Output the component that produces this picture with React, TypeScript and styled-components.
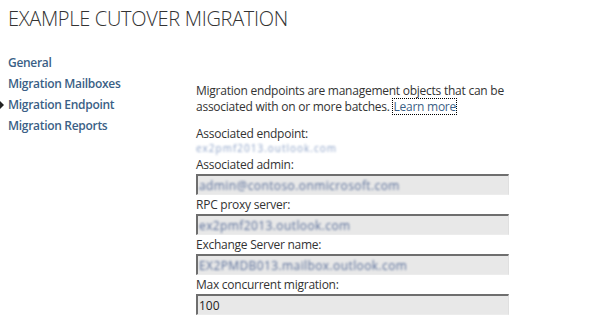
import React from "react";
import styled, { createGlobalStyle } from "styled-components";

const Global = createGlobalStyle`
  html, body { margin: 0; padding: 0; background: #fff; }
  body { font-family: "Open Sans", "Noto Sans", sans-serif; color: #333; }
`;

const Page = styled.div`
  width: 600px;
  height: 329px;
  overflow: hidden;
  box-sizing: border-box;
`;

const Title = styled.h1`
  margin: 0;
  padding: 6px 0 0 8px;
  font-family: "Open Sans", sans-serif;
  font-weight: 300;
  font-size: 20px;
  line-height: 26px;
  color: #333;
  letter-spacing: -0.3px;
`;

const Body = styled.div`
  display: flex;
  padding-top: 20px;
`;

const Nav = styled.nav`
  width: 196px;
  display: flex;
  flex-direction: column;
`;

const NavItem = styled.div<{ $active?: boolean }>`
  position: relative;
  padding-left: 8px;
  height: 21px;
  line-height: 21px;
  font-size: 12px;
  font-weight: 600;
  letter-spacing: -0.3px;
  color: #3b5f86;
  &::before {
    content: "";
    display: ${(p) => (p.$active ? "block" : "none")};
    position: absolute;
    left: 0;
    top: 7px;
    border-left: 4px solid #222;
    border-top: 4px solid transparent;
    border-bottom: 4px solid transparent;
  }
`;

const Content = styled.div`
  width: 314px;
  padding-top: 31px;
  font-size: 12px;
  letter-spacing: -0.25px;
  color: #333;
`;

const Desc = styled.p`
  margin: 0 0 11px 0;
  line-height: 16px;
`;

const LearnMore = styled.a`
  display: inline-block;
  line-height: 15px;
  margin-left: 1px;
  color: #3b5f86;
  text-decoration: none;
  outline: 1px dotted #000;
  outline-offset: 0;
`;

const Label = styled.div`
  line-height: 16px;
  margin-top: 2px;
`;

const Blurred = styled.div`
  line-height: 13px;
  font-size: 10px;
  letter-spacing: 1px;
  color: #8ea3c8;
  filter: blur(1.1px);
`;

const Field = styled.div`
  box-sizing: border-box;
  height: 21px;
  width: 313px;
  margin-top: 1px;
  margin-bottom: 1px;
  background: #e8e8e8;
  border-top: 2px solid #6e6e6e;
  border-left: 2px solid #6e6e6e;
  border-right: 1px solid #e0e0e0;
  border-bottom: 1px solid #ececec;
  padding: 1px 1px;
  display: flex;
  align-items: center;
`;

const FieldValue = styled.span<{ $blur?: boolean }>`
  font-size: 12px;
  color: ${(p) => (p.$blur ? "#5a6f9a" : "#222")};
  filter: ${(p) => (p.$blur ? "blur(1.1px)" : "none")};
  letter-spacing: ${(p) => (p.$blur ? "0.4px" : "0")};
`;

export default function App() {
  return (
    <Page>
      <Global />
      <Title>EXAMPLE CUTOVER MIGRATION</Title>
      <Body>
        <Nav>
          <NavItem>General</NavItem>
          <NavItem>Migration Mailboxes</NavItem>
          <NavItem $active>Migration Endpoint</NavItem>
          <NavItem>Migration Reports</NavItem>
        </Nav>
        <Content>
          <Desc>
            Migration endpoints are management objects that can be associated with on or more batches.{" "}
            <LearnMore href="#">Learn more</LearnMore>
          </Desc>
          <Label>Associated endpoint:</Label>
          <Blurred>ex2pmf2013.outlook.com</Blurred>
          <Label>Associated admin:</Label>
          <Field>
            <FieldValue $blur>admin@contoso.onmicrosoft.com</FieldValue>
          </Field>
          <Label>RPC proxy server:</Label>
          <Field>
            <FieldValue $blur>ex2pmf2013.outlook.com</FieldValue>
          </Field>
          <Label>Exchange Server name:</Label>
          <Field>
            <FieldValue $blur>EX2PMDB013.mailbox.outlook.com</FieldValue>
          </Field>
          <Label>Max concurrent migration:</Label>
          <Field>
            <FieldValue>100</FieldValue>
          </Field>
        </Content>
      </Body>
    </Page>
  );
}
